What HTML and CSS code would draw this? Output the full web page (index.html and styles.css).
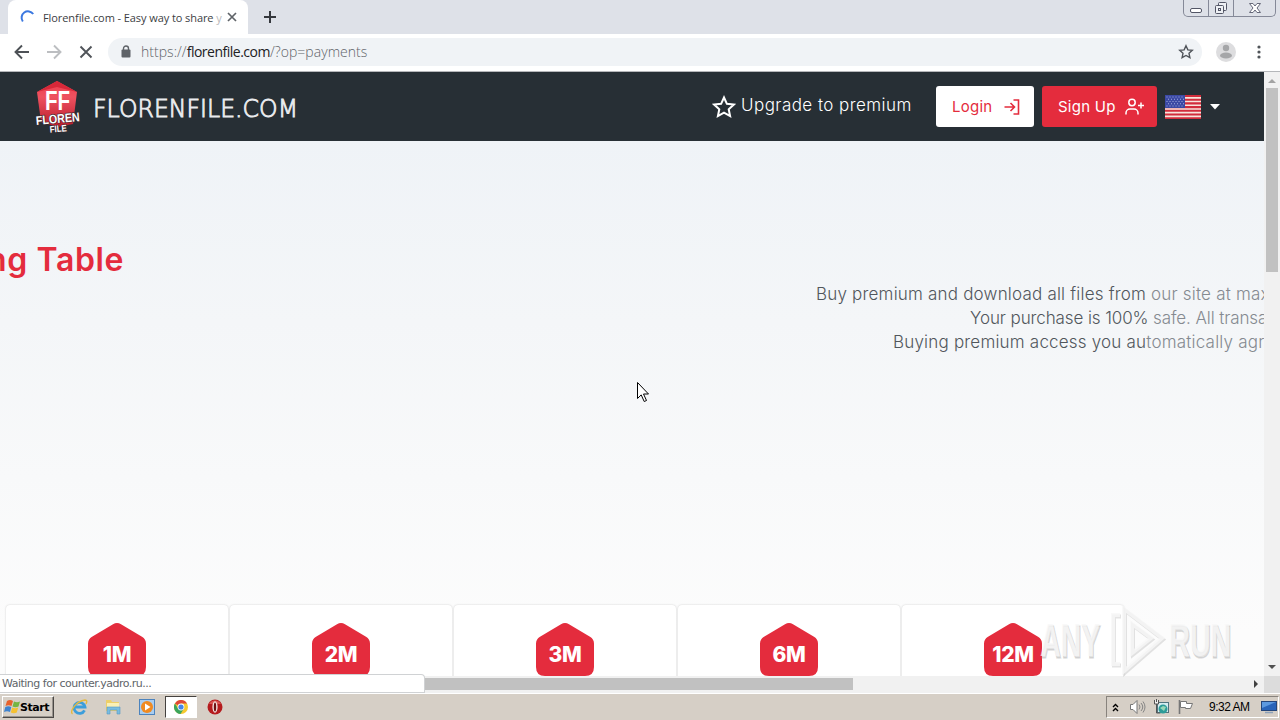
FILE: index.html
```html
<!DOCTYPE html>
<html lang="en">
<head>
    <meta charset="UTF-8">
    <meta name="viewport" content="width=device-width, initial-scale=1.0">
    <title>Florenfile.com - Easy way to share your files</title>
    <link rel="stylesheet" href="styles.css">
</head>
<body>
    <div class="tab-strip">
        <div class="tab">
            <svg class="spinner" width="16" height="16" viewBox="0 0 16 16"><path d="M2.800 12.500A6 6 0 0 1 13.200 5" fill="none" stroke="#3b78e0" stroke-width="2"/></svg>
            <span class="tab-title">Florenfile.com - Easy way to share <i>y</i></span>
            <svg class="tab-close" width="10" height="10" viewBox="0 0 10 10"><path d="M1 1l8 8M9 1L1 9" stroke="#5f6368" stroke-width="1.7"/></svg>
        </div>
        <svg class="new-tab" width="12" height="12" viewBox="0 0 12 12"><path d="M6 0v12M0 6h12" stroke="#35383d" stroke-width="2"/></svg>
        <div class="window-buttons">
            <span><svg width="14" height="16" viewBox="0 0 14 16"><rect x="1.5" y="8.500" width="11" height="4" rx="1.500" fill="#fff" stroke="#535666"/></svg></span>
            <span><svg width="14" height="16" viewBox="0 0 14 16"><g fill="#eef0f4" stroke="#535666"><rect x="4.500" y="2.500" width="8" height="8" rx="1"/><rect x="1.500" y="5.500" width="8" height="8" rx="1"/><rect x="4.500" y="8.500" width="2" height="2"/></g></svg></span>
            <span class="wide"><svg width="14" height="16" viewBox="0 0 14 16"><path d="M1.500 3.500h3.500l2 2.500 2-2.500h3.500L9 8l3.500 4.500H9L7 10l-2 2.500H1.500L5 8z" fill="#fff" stroke="#656879"/></svg></span>
        </div>
    </div>

    <div class="toolbar">
        <svg class="nav" width="16" height="16" viewBox="0 0 16 16"><path d="M15 8H2M8 1.500L1.500 8 8 14.500" fill="none" stroke="#4d5156" stroke-width="1.900"/></svg>
        <svg class="nav" width="16" height="16" viewBox="0 0 16 16"><path d="M1 8h13M8 1.500L14.500 8 8 14.500" fill="none" stroke="#bcbec1" stroke-width="1.900"/></svg>
        <svg class="nav" width="16" height="16" viewBox="0 0 16 16"><path d="M2.500 2.500l11 11M13.500 2.500l-11 11" stroke="#505459" stroke-width="1.900"/></svg>
        <div class="omnibox">
            <svg width="10" height="13" viewBox="0 0 10 13"><path d="M2.500 6V3.500a2.500 2.500 0 0 1 5 0V6" fill="none" stroke="#5f6368" stroke-width="1.400"/><rect x="0.500" y="4.500" width="9" height="8" rx="1" fill="#5f6368"/></svg>
            <span class="url">https://<b>florenfile.com</b>/?op=payments</span>
            <svg class="bookmark" width="16" height="16" viewBox="0 0 16 16"><path d="M8 1.800l1.850 4.050 4.450.5-3.300 3 .9 4.350L8 11.500l-3.900 2.200.9-4.350-3.300-3 4.450-.5z" fill="none" stroke="#50545a" stroke-width="1.400"/></svg>
        </div>
        <svg class="profile" width="20" height="20" viewBox="0 0 20 20"><circle cx="10" cy="10" r="10" fill="#dddddf"/><circle cx="10" cy="6" r="3.200" fill="#a5a6a8"/><ellipse cx="10" cy="13.500" rx="6" ry="3" fill="#a5a6a8"/></svg>
        <svg class="menu" width="4" height="14" viewBox="0 0 4 14"><g fill="#505459"><circle cx="2" cy="2" r="1.600"/><circle cx="2" cy="7" r="1.600"/><circle cx="2" cy="12" r="1.600"/></g></svg>
    </div>

    <div class="viewport">
        <div class="page">
            <header class="site-header">
                <svg class="logo" width="270" height="56" viewBox="0 0 270 56">
                    <defs>
                        <linearGradient id="shield" x1="0" y1="0" x2="0" y2="1"><stop offset="0" stop-color="#ee3d4c"/><stop offset=".35" stop-color="#ee5260"/><stop offset="1" stop-color="#b91c2b"/></linearGradient>
                    </defs>
                    <path d="M23 2L43 13 39 45 24 48 7 43 3 13z" fill="url(#shield)"/>
                    <path d="M3 13L23 2 43 13 23 8z" fill="#d72839"/>
                    <g class="logo-mark">
                        <text x="11" y="31" font-size="27" textLength="25" lengthAdjust="spacingAndGlyphs">FF</text>
                        <text class="thin" transform="rotate(-5 24 43)" x="2" y="44" font-size="12.500" textLength="44" lengthAdjust="spacingAndGlyphs">FLOREN</text>
                        <text class="thin" transform="rotate(-5 24 53)" x="16" y="53" font-size="9.500" textLength="17" lengthAdjust="spacingAndGlyphs">FILE</text>
                    </g>
                    <text class="logo-name" x="59" y="37.500" textLength="205" lengthAdjust="spacingAndGlyphs">FLORENFILE.COM</text>
                </svg>
                <a class="upgrade">
                    <svg width="24" height="24" viewBox="0 0 24 24"><path d="M12 2.500l2.900 6.300 6.900.8-5.100 4.700 1.400 6.800-6.100-3.400-6.100 3.400 1.400-6.800-5.100-4.700 6.900-.8z" fill="none" stroke="#fff" stroke-width="2"/></svg>
                    <span>Upgrade to premium</span>
                </a>
                <a class="btn btn-login">
                    <span>Login</span>
                    <svg width="18" height="18" viewBox="0 0 18 18"><path d="M1.500 9h10M7.500 5l4 4-4 4M10.500 2h5v14h-5" fill="none" stroke="#e42c3d" stroke-width="1.600"/></svg>
                </a>
                <a class="btn btn-signup">
                    <span>Sign Up</span>
                    <svg width="19" height="18" viewBox="0 0 19 18"><path d="M1 16.500v-1.500a4 4 0 0 1 4-4h4a4 4 0 0 1 4 4v1.500M13 7.500h6M16 4.500v6" fill="none" stroke="#fff" stroke-width="1.500"/><circle cx="7" cy="4.500" r="3.200" fill="none" stroke="#fff" stroke-width="1.500"/></svg>
                </a>
                <svg class="flag" width="36" height="24" viewBox="0 0 36 24">
                    <rect width="36" height="24" fill="#f7e5dc"/>
                    <path d="M0 1h36M0 4.700h36M0 8.400h36M0 12.100h36M0 15.800h36M0 19.500h36M0 23.200h36" stroke="#d22c3b" stroke-width="2.100"/>
                    <rect width="20" height="13" fill="#3b49a4"/>
                    <path d="M1.500 2h18M3 4.250h16M1.500 6.500h18M3 8.750h16M1.500 11h18" stroke="#a3acdc" stroke-width="1" stroke-dasharray="1 2"/>
                </svg>
                <svg class="caret" width="10" height="6" viewBox="0 0 10 6"><path d="M0 0h10L5 5.500z" fill="#fff"/></svg>
            </header>

            <section class="intro">
                <h1><span>Pricing Table</span></h1>
                <div class="intro-text">
                    <p class="line-a">Buy premium and download all files from <em>our site at maximum</em></p>
                    <p class="line-b">Your purchase is 100% <em>safe. All transactions</em></p>
                    <p class="line-c">Buying premium access you au<em>tomatically agree</em></p>
                </div>
            </section>

            <section class="plans">
                <div class="plan"><div class="badge"><svg width="60" height="54" viewBox="0 0 60 54"><path d="M26 1.200q4-2.400 8 0l21 12.500q4 2.400 4 7V44q0 9-9 9H10q-9 0-9-9V20.700q0-4.600 4-7z"/></svg><b>1M</b></div></div>
                <div class="plan"><div class="badge"><svg width="60" height="54" viewBox="0 0 60 54"><path d="M26 1.200q4-2.400 8 0l21 12.500q4 2.400 4 7V44q0 9-9 9H10q-9 0-9-9V20.700q0-4.600 4-7z"/></svg><b>2M</b></div></div>
                <div class="plan"><div class="badge"><svg width="60" height="54" viewBox="0 0 60 54"><path d="M26 1.200q4-2.400 8 0l21 12.500q4 2.400 4 7V44q0 9-9 9H10q-9 0-9-9V20.700q0-4.600 4-7z"/></svg><b>3M</b></div></div>
                <div class="plan"><div class="badge"><svg width="60" height="54" viewBox="0 0 60 54"><path d="M26 1.200q4-2.400 8 0l21 12.500q4 2.400 4 7V44q0 9-9 9H10q-9 0-9-9V20.700q0-4.600 4-7z"/></svg><b>6M</b></div></div>
                <div class="plan"><div class="badge"><svg width="60" height="54" viewBox="0 0 60 54"><path d="M26 1.200q4-2.400 8 0l21 12.500q4 2.400 4 7V44q0 9-9 9H10q-9 0-9-9V20.700q0-4.600 4-7z"/></svg><b>12M</b></div></div>
            </section>
        </div>

        <div class="scroll-y">
            <svg width="8" height="4" viewBox="0 0 8 4"><path d="M0 4l4-4 4 4z" fill="#a3a3a3"/></svg>
            <div class="thumb"></div>
            <svg class="down" width="8" height="4" viewBox="0 0 8 4"><path d="M0 0l4 4 4-4z" fill="#505050"/></svg>
        </div>
        <div class="scroll-x">
            <div class="thumb"></div>
            <svg width="4" height="8" viewBox="0 0 4 8"><path d="M0 0l4 4-4 4z" fill="#404040"/></svg>
        </div>
        <div class="corner"></div>
        <div class="status">Waiting for counter.yadro.ru...</div>
    </div>

    <div class="taskbar">
        <div class="start">
            <svg width="17" height="16" viewBox="0 0 17 16"><path d="M3 2q3-2 6 0L7.500 7q-3-1.500-6 0z" fill="#e8622c"/><path d="M10 2.500q3 1.500 6 0L14.500 7.500q-3 1.500-6 0z" fill="#75b543"/><path d="M1.300 8q3-1.500 6 0L6 13q-3-1.500-6 0z" fill="#3f83cf"/><path d="M8.200 8.500q3 1.500 6 0L12.800 13.500q-3 1.500-6 0z" fill="#f5c132"/></svg>
            <b>Start</b>
        </div>
        <div class="task">
            <svg width="18" height="18" viewBox="0 0 18 18"><path d="M14.500 12.300A5.500 5.500 0 1 1 15 9H5" fill="none" stroke="#3c9edb" stroke-width="2.800"/><path d="M2.500 16C-1 14 6 3 15 2q3 0 1 4" fill="none" stroke="#e5b93d" stroke-width="1.400"/></svg>
        </div>
        <div class="task">
            <svg width="18" height="18" viewBox="0 0 18 18"><path d="M2 2h5l1 2h7v9H2z" fill="#edcf69"/><path d="M3 5h12v4H3z" fill="#faf0b5"/><path d="M3 9h13v7h-3v-4H6v4H3z" fill="#79bde0" stroke="#5599c4" stroke-width=".600"/></svg>
        </div>
        <div class="task">
            <svg width="18" height="18" viewBox="0 0 18 18"><rect x="1.500" y="1.500" width="15" height="15" fill="#a9cdf0" stroke="#4c83bd"/><circle cx="9" cy="9" r="6" fill="#f08a21"/><path d="M7 5.500L12.500 9 7 12.500z" fill="#fff"/></svg>
        </div>
        <div class="task active">
            <svg width="14" height="14" viewBox="0 0 14 14"><circle cx="7" cy="7" r="7" fill="#f6c92f"/><path d="M7 7L.9 3.500A7 7 0 0 1 13.100 3.500H7z" fill="#df4837"/><path d="M.9 3.500A7 7 0 0 0 6.500 14L10 8.500 4 8.500z" fill="#3ba55c"/><circle cx="7" cy="7" r="3.400" fill="#fff"/><circle cx="7" cy="7" r="2.600" fill="#4585e8"/></svg>
        </div>
        <div class="task">
            <svg width="16" height="16" viewBox="0 0 16 16"><circle cx="8" cy="8" r="7.500" fill="#b51b1e"/><path d="M2 5a7 7 0 0 1 12 0z" fill="#da5553"/><ellipse cx="8" cy="8" rx="2.600" ry="5.700" fill="#f5e6e4"/><ellipse cx="8" cy="8" rx="1.200" ry="4.600" fill="#6e1113"/></svg>
        </div>
        <div class="tray">
            <svg width="7" height="9" viewBox="0 0 7 9"><path d="M1 4l2.500-2.500L6 4M1 8l2.500-2.500L6 8" fill="none" stroke="#000" stroke-width="1.400"/></svg>
            <svg class="sound" width="17" height="16" viewBox="0 0 17 16"><path d="M1.500 5.500h2.500l4-4v13l-4-4H1.500z" fill="#fff" stroke="#777"/><path d="M10 5.500q2 2.500 0 5M12 4q3.500 4 0 8M14 2.500q4 5.500 0 11" fill="none" stroke="#858585"/></svg>
            <svg class="net" width="17" height="16" viewBox="0 0 17 16"><rect x="4.500" y="3.500" width="11" height="10" fill="#d6edf0" stroke="#52747f"/><path d="M1 1h5v4H1z" fill="#eee"/><path d="M1.500 1v4h4V1M3.500 0v3M3.500 5v9h4" fill="none" stroke="#555"/><circle cx="10" cy="10" r="4.500" fill="#2d9c99"/><path d="M7 9l3-2 3 1-2 4z" fill="#9bd7b6"/></svg>
            <svg class="action" width="17" height="16" viewBox="0 0 17 16"><path d="M2.500 1v14" stroke="#777" stroke-width="1.600"/><path d="M3.500 2.500h6v2h6l-2 5h-5v-1h-5z" fill="#fff" stroke="#777"/></svg>
            <time>9:32 AM</time>
            <svg class="desktop" width="16" height="14" viewBox="0 0 16 14"><rect x=".5" y="1.500" width="15" height="9" fill="#2864b9" stroke="#24467b"/><path d="M1 2h14L1 8z" fill="#5c99df"/><path d="M4 12.500h8" stroke="#8da1b9" stroke-width="1.500"/></svg>
        </div>
    </div>

    <svg class="watermark" width="200" height="72" viewBox="0 0 200 72">
        <g class="wm-shade" transform="translate(1 1.500)">
            <text x="3" y="51" textLength="60" lengthAdjust="spacingAndGlyphs">ANY</text>
            <text x="132" y="51" textLength="62" lengthAdjust="spacingAndGlyphs">RUN</text>
            <path d="M87 4L125 33 87 66z M95 19L114 33 95 48z M83 10h-7v49h7"/>
        </g>
        <g class="wm-face">
            <text x="3" y="51" textLength="60" lengthAdjust="spacingAndGlyphs">ANY</text>
            <text x="132" y="51" textLength="62" lengthAdjust="spacingAndGlyphs">RUN</text>
            <path d="M87 4L125 33 87 66z M95 19L114 33 95 48z M83 10h-7v49h7"/>
        </g>
    </svg>
    <svg class="pointer" width="13" height="22" viewBox="0 0 13 22"><path d="M1.500 1.500v16l3.700-3.600 3 6.600 2.300-1-3-6.500h5z" fill="#fff" stroke="#000"/></svg>
</body>
</html>
```
FILE: styles.css
```css
* {
    box-sizing: border-box;
}

body {
    margin: 0;
    width: 1280px;
    height: 720px;
    overflow: hidden;
    display: flex;
    flex-direction: column;
    font-family: "DejaVu Sans", sans-serif;
    background: #fff;
    position: relative;
}

svg {
    display: block;
    flex-shrink: 0;
}

/* browser */
.tab-strip {
    height: 34px;
    background: #dee1e8;
    display: flex;
    align-items: center;
    padding-left: 8px;
    flex-shrink: 0;
}

.tab {
    width: 240px;
    height: 34px;
    background: #fff;
    border-radius: 8px 8px 0 0;
    display: flex;
    align-items: center;
    padding: 0 11px 0 12px;
}

.tab-title {
    width: 178px;
    margin-left: 7px;
    font: 11px "Open Sans", sans-serif;
    letter-spacing: -0.08px;
    white-space: nowrap;
    color: #3c4043;
}

.tab-title i {
    font-style: normal;
    color: #bbb;
}

.tab-close {
    margin-left: auto;
}

.new-tab {
    margin-left: 16px;
}

.window-buttons {
    display: flex;
    align-self: flex-start;
    margin-left: auto;
    margin-right: 4px;
    height: 17px;
    border: 1px solid #858998;
    border-top: 0;
    border-radius: 0 0 5px 5px;
}

.window-buttons span {
    width: 25px;
    display: flex;
    justify-content: center;
    border-right: 1px solid #858998;
}

.window-buttons .wide {
    width: 41px;
    border: 0;
}

.toolbar {
    height: 38px;
    flex-shrink: 0;
    display: flex;
    align-items: center;
    border-bottom: 1px solid #b5b7ba;
    padding: 0 0 2px 14px;
}

.nav {
    margin-right: 16px;
}

.omnibox {
    width: 1094px;
    height: 28px;
    margin-left: -2px;
    border-radius: 14px;
    background: #f0f3f6;
    display: flex;
    align-items: center;
    padding: 0 8px 0 13px;
}

.url {
    margin-left: 10px;
    font: 300 14px "Open Sans", sans-serif;
    letter-spacing: 0.04px;
    color: #5f6368;
}

.url b {
    font-weight: 400;
    color: #202124;
    letter-spacing: -0.5px;
}

.bookmark {
    margin-left: auto;
}

.profile {
    margin-left: 14px;
}

.menu {
    margin-left: 21px;
}

.viewport {
    height: 621px;
    flex-shrink: 0;
    display: grid;
    grid-template-columns: 1264px 16px;
    grid-template-rows: 604px 17px;
    position: relative;
}

/* site */
.page {
    overflow: hidden;
    background: linear-gradient(#eff3f7 69px, #f4f6f8 250px, #fcfcfc 560px);
    font-family: Inter, sans-serif;
}

.site-header {
    height: 69px;
    background: #272f35;
    display: flex;
    align-items: center;
    padding-left: 34px;
    color: #fff;
}

.logo-mark {
    font-family: "Liberation Sans", sans-serif;
    font-weight: 700;
    fill: #fff;
}

.logo-mark .thin {
    stroke: #40292f;
    stroke-width: 1.2px;
    paint-order: stroke;
}

.logo-name {
    font: 200 24px "DejaVu Sans", "DejaVu Sans Light", sans-serif;
    fill: #e9ebee;
    stroke: #e9ebee;
    stroke-width: 0.9px;
}

.upgrade {
    display: flex;
    align-items: center;
    margin-left: 408px;
    width: 224px;
    font-weight: 300;
    font-size: 17px;
}

.upgrade span {
    margin: -4px 0 0 5px;
    letter-spacing: 0.45px;
    white-space: nowrap;
}

.btn {
    height: 41px;
    border-radius: 3px;
    display: flex;
    align-items: center;
    justify-content: space-between;
    padding: 0 13px 0 16px;
    font-size: 15px;
    letter-spacing: 0.25px;
}

.btn-login {
    width: 98px;
    background: #fff;
    color: #e42c3d;
}

.btn-signup {
    width: 115px;
    margin-left: 8px;
    background: #e42c3d;
}

.flag {
    margin-left: 8px;
}

.caret {
    margin-left: 9px;
}

.intro {
    height: 464px;
    padding-top: 96px;
}

.intro h1 {
    width: 124px;
    margin: 0;
    display: flex;
    justify-content: flex-end;
    white-space: nowrap;
    font-size: 32px;
    line-height: 46px;
    font-weight: 600;
    letter-spacing: 0.6px;
    color: #e42c3d;
}

.intro-text {
    margin-top: -1px;
    font-size: 17px;
    font-weight: 300;
    line-height: 24px;
    color: #51565c;
    white-space: nowrap;
    letter-spacing: 0.2px;
}

.intro-text p {
    margin: 0;
}

.intro-text em {
    font-style: normal;
    color: #858a90;
}

.line-a {
    padding-left: 816px;
}

.line-b {
    padding-left: 970px;
    letter-spacing: -0.1px;
}

.line-c {
    padding-left: 893px;
}

.plans {
    display: flex;
    gap: 2px;
    padding-left: 6px;
}

.plan {
    width: 222px;
    height: 90px;
    padding-top: 18px;
    background: #fff;
    border-radius: 4px;
    box-shadow: 0 0 2px rgba(0, 0, 0, 0.2);
}

.badge {
    width: 60px;
    margin: 0 auto;
    display: grid;
    place-items: center;
    fill: #e42c3d;
}

.badge svg,
.badge b {
    grid-area: 1 / 1;
}

.badge b {
    margin-top: 9px;
    color: #fff;
    font-size: 21px;
    font-weight: 800;
    letter-spacing: -0.3px;
}

/* scrollbars */
.scroll-y {
    background: #f1f1f1;
    display: flex;
    flex-direction: column;
    align-items: center;
    padding: 7px 0;
}

.scroll-y .thumb {
    width: 12px;
    height: 184px;
    margin-top: 5px;
    background: #c1c1c1;
}

.scroll-y .down {
    margin-top: auto;
}

.scroll-x {
    background: #f1f1f1;
    display: flex;
    align-items: center;
    padding: 0 6px 1px 424px;
}

.scroll-x .thumb {
    width: 429px;
    height: 12px;
    background: #c1c1c1;
}

.scroll-x svg {
    margin-left: auto;
}

.corner {
    background: #dcdcdc;
}

.status {
    position: absolute;
    left: 0;
    bottom: 0;
    width: 425px;
    height: 19px;
    border: 1px solid #d0d2d4;
    border-left: 0;
    border-radius: 0 4px 0 0;
    background: #fff;
    color: #606469;
    font: 11px/17px "DejaVu Sans", sans-serif;
    padding-left: 2px;
    letter-spacing: -0.5px;
}

/* taskbar */
.taskbar {
    flex: 1;
    display: flex;
    align-items: center;
    background: #d6cfc6;
    border-top: 1px solid #fff;
    padding-left: 2px;
}

.start {
    width: 52px;
    height: 22px;
    display: flex;
    align-items: center;
    border: 1px solid;
    border-color: #fff #4b4845 #4b4845 #fff;
    box-shadow: inset -1px -1px #99948e;
    font-size: 11px;
    letter-spacing: -0.45px;
    padding-left: 1px;
    margin-right: 9px;
}

.start b {
    margin-left: -1px;
}

.task {
    width: 32px;
    height: 22px;
    margin-right: 2px;
    display: flex;
    align-items: center;
    justify-content: center;
}

.task.active {
    background: #fff;
    border: 1px solid;
    border-color: #45423f #fff #fff #45423f;
}

.tray {
    margin-left: auto;
    width: 173px;
    height: 22px;
    margin-right: 1px;
    display: flex;
    align-items: center;
    border: 1px solid;
    border-color: #88837d #fff #fff #88837d;
    padding-left: 5px;
}

.sound {
    margin-left: 10px;
}

.net,
.action {
    margin-left: 7px;
}

.tray time {
    font: 12px "Liberation Sans", sans-serif;
    letter-spacing: -0.5px;
    margin-left: 15px;
    white-space: nowrap;
}

.desktop {
    margin-left: auto;
    margin-right: 1px;
}

/* overlays */
.watermark {
    position: absolute;
    left: 1037px;
    top: 605px;
    font: 700 46px "Liberation Sans", sans-serif;
}

.watermark path {
    fill: none;
    stroke-width: 4px;
}

.wm-shade {
    fill: rgba(130, 130, 130, 0.22);
    stroke: rgba(130, 130, 130, 0.22);
    stroke-width: 1.5px;
}

.wm-face {
    fill: rgba(248, 248, 248, 0.8);
    stroke: rgba(248, 248, 248, 0.8);
    stroke-width: 0;
}

.pointer {
    position: absolute;
    left: 636px;
    top: 381px;
}
```
